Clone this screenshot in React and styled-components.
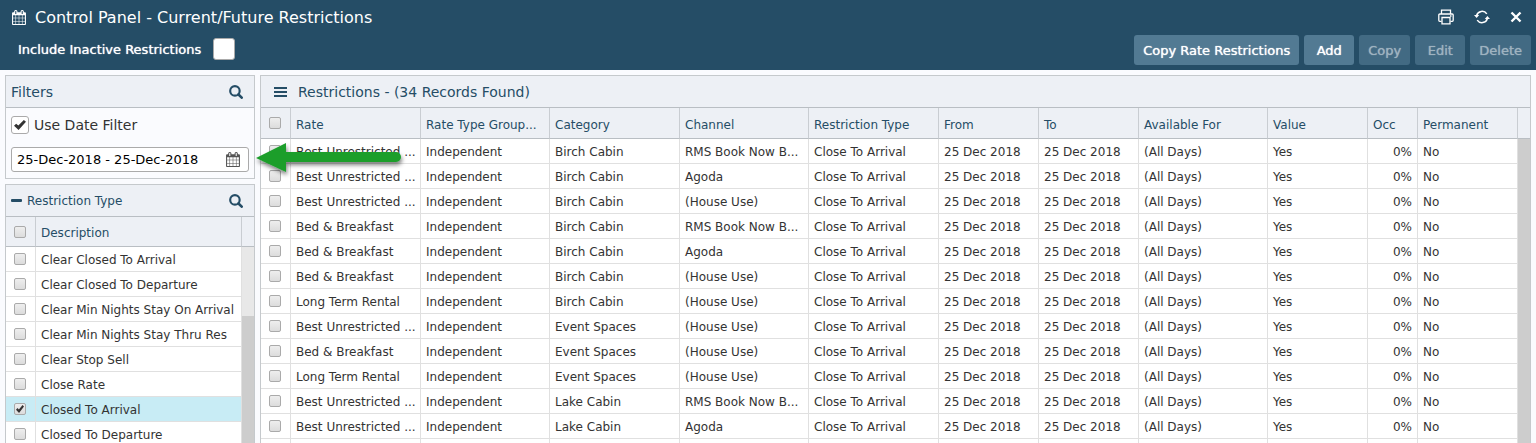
import React, { useState } from 'react';
import styled, { createGlobalStyle } from 'styled-components';

const GlobalStyle = createGlobalStyle`
  * {
    box-sizing: border-box;
  }

  body {
    margin: 0;
    background: #fafbfe;
    color: #333;
    font-family: "DejaVu Sans", Verdana, sans-serif;
    font-size: 12px;
  }
`;

const Page = styled.div`
  display: flex;
  flex-direction: column;
  height: 100vh;
  overflow: hidden;
`;

const Header = styled.header`
  flex: none;
  background: #254d66;
  color: #fff;
`;

const TitleBar = styled.div`
  display: flex;
  align-items: center;
  justify-content: space-between;
  height: 34px;
  padding: 0 14px 0 12px;
`;

const Title = styled.h1`
  display: flex;
  align-items: center;
  gap: 9px;
  margin: 0;
  font-size: 16px;
  font-weight: normal;
`;

const WindowTools = styled.div`
  display: flex;
  align-items: center;
  gap: 20px;
`;

const IconButton = styled.button`
  display: flex;
  align-items: center;
  justify-content: center;
  padding: 0;
  border: 0;
  background: none;
  color: inherit;
  cursor: pointer;
`;

const ToolBar = styled.div`
  display: flex;
  align-items: flex-start;
  justify-content: space-between;
  height: 36px;
  padding: 1px 5px 0 18px;
`;

const InactiveLabel = styled.label`
  display: flex;
  align-items: center;
  gap: 12px;
  height: 28px;
  font-size: 13px;
  text-shadow: 0 0 1px currentColor;
`;

const Actions = styled.div`
  display: flex;
  gap: 5px;
`;

const ActionButton = styled.button`
  min-width: 50px;
  height: 30px;
  padding: 0 9px;
  border: 0;
  border-radius: 3px;
  background: #527a93;
  color: #fff;
  font-family: inherit;
  font-size: 13px;
  text-shadow: 0 0 1px currentColor;
  cursor: pointer;

  &:disabled {
    background: #426a83;
    color: #9fb3c0;
    cursor: default;
  }
`;

const Content = styled.main`
  display: flex;
  flex: 1;
  gap: 5px;
  min-height: 0;
  padding: 5px 5px 0;
`;

const Sidebar = styled.div`
  display: flex;
  flex: none;
  flex-direction: column;
  gap: 5px;
  width: 250px;
`;

const Panel = styled.section`
  display: flex;
  flex-direction: column;
  flex: ${props => (props.$fill ? '1' : 'none')};
  min-width: 0;
  min-height: 0;
  border: 1px solid #c5c9cc;
  border-bottom-width: ${props => (props.$fill ? '0' : '1px')};
  overflow: hidden;
`;

const PanelHeader = styled.div`
  display: flex;
  flex: none;
  align-items: center;
  justify-content: space-between;
  height: 32px;
  padding: 0 11px 0 5px;
  border-bottom: 1px solid #b9bec3;
  background: #edf0f5;
  color: #254d66;
`;

const PanelTitle = styled.h2`
  display: flex;
  align-items: center;
  gap: ${props => (props.$wide ? '11px' : '5px')};
  margin: 0;
  padding-left: ${props => (props.$wide ? '8px' : '0')};
  font-size: ${props => (props.$small ? '12px' : '14px')};
  font-weight: normal;
`;

const FilterBody = styled.div`
  display: flex;
  flex-direction: column;
  gap: 13px;
  padding: 8px 5px 6px;
`;

const FilterCheck = styled.label`
  display: flex;
  align-items: center;
  gap: 5px;
  font-size: 14px;
`;

const DateField = styled.div`
  display: flex;
  align-items: center;
  height: 25px;
  padding: 0 8px 0 5px;
  border: 1px solid #aaa;
  border-radius: 3px;
  background: #fff;
  color: #555;
`;

const DateInput = styled.input`
  flex: 1;
  min-width: 0;
  padding: 0;
  border: 0;
  outline: 0;
  background: none;
  color: #000;
  font-family: inherit;
  font-size: 13px;
`;

const CheckBox = styled.input.attrs({ type: 'checkbox' })`
  display: flex;
  flex: none;
  align-items: center;
  justify-content: center;
  appearance: none;
  width: ${props => props.$size}px;
  height: ${props => props.$size}px;
  margin: 0;
  border: 1px solid #aaa;
  border-radius: ${props => (props.$size > 12 ? '3px' : '2px')};
  background: ${props => (props.$size > 12 ? '#fff' : 'linear-gradient(#eee, #dcdcdc)')};

  &:checked::after {
    content: '';
    width: ${props => (props.$size > 12 ? '12px' : '8px')};
    height: ${props => (props.$size > 12 ? '10px' : '8px')};
    background: #333;
    clip-path: polygon(0 58%, 18% 38%, 36% 56%, 82% 0, 100% 18%, 38% 100%);
  }
`;

const GridArea = styled.div`
  display: flex;
  flex: 1;
  align-items: stretch;
  min-height: 0;
  overflow: hidden;
  background: #fff;
`;

const Table = styled.table`
  flex: 1;
  align-self: flex-start;
  width: 100%;
  min-width: 0;
  table-layout: fixed;
  border-collapse: separate;
  border-spacing: 0;
`;

const HeadCell = styled.th`
  height: ${props => props.$height};
  padding: ${props => (props.$check ? '0 0 0 8px' : '3px 2px 0 5px')};
  border-right: 1px solid #c9cdd2;
  border-bottom: 1px solid #b9bec3;
  background: #edf0f5;
  color: #254d66;
  font-weight: normal;
  text-align: left;
  white-space: nowrap;
  overflow: hidden;
`;

const Cell = styled.td`
  height: 25px;
  padding: ${props => (props.$check ? '0 0 0 8px' : '2px 5px 0')};
  border-right: 1px solid #e0e0e0;
  border-bottom: 1px solid #e0e0e0;
  text-align: ${props => (props.$right ? 'right' : 'left')};
  white-space: nowrap;
  overflow: hidden;
`;

const Row = styled.tr`
  background: ${props => (props.$selected ? '#c8ecf5' : '#fff')};
`;

const ScrollTrack = styled.div`
  display: flex;
  flex: none;
  flex-direction: column;
  width: ${props => props.$width};
  background: #e8e8e8;
`;

const ScrollCap = styled.div`
  height: ${props => props.$height};
  border-bottom: 1px solid #b9bec3;
  background: #edf0f5;
`;

const ScrollThumb = styled.div`
  flex: 1;
  margin-top: ${props => props.$top};
  background: #cdcdcd;
`;

const ArrowLayer = styled.svg`
  position: absolute;
  top: 138px;
  left: 250px;
  pointer-events: none;
`;

const CalendarIcon = () => (
  <svg width="14" height="15" viewBox="64 0 1664 1792" fill="currentColor" aria-hidden="true">
    <path d="M192 1664h288v-288h-288v288zm352 0h320v-288h-320v288zm-352-352h288v-320h-288v320zm352 0h320v-320h-320v320zm-352-384h288v-288h-288v288zm736 736h320v-288h-320v288zm-384-736h320v-288h-320v288zm768 736h288v-288h-288v288zm-384-352h320v-320h-320v320zm-352-864v-288q0-13-9.500-22.500t-22.500-9.500h-64q-13 0-22.500 9.500t-9.500 22.500v288q0 13 9.500 22.500t22.500 9.500h64q13 0 22.500-9.500t9.500-22.500zm736 864h288v-320h-288v320zm-384-384h320v-288h-320v288zm384 0h288v-288h-288v288zm32-480v-288q0-13-9.500-22.500t-22.500-9.500h-64q-13 0-22.500 9.500t-9.500 22.500v288q0 13 9.500 22.500t22.500 9.500h64q13 0 22.500-9.500t9.500-22.500zm384-64v1280q0 52-38 90t-90 38h-1408q-52 0-90-38t-38-90v-1280q0-52 38-90t90-38h128v-96q0-66 47-113t113-47h64q66 0 113 47t47 113v96h384v-96q0-66 47-113t113-47h64q66 0 113 47t47 113v96h128q52 0 90 38t38 90z" />
  </svg>
);

const SearchIcon = () => (
  <svg width="14" height="14" viewBox="0 0 13 13" fill="none" stroke="currentColor" aria-hidden="true">
    <circle cx="5.500" cy="5.500" r="4.400" strokeWidth="2" />
    <path d="M8.800 8.800l3 3" strokeWidth="2.400" strokeLinecap="round" />
  </svg>
);

const PrintIcon = () => (
  <svg width="16" height="16" viewBox="0 0 16 16" fill="none" stroke="currentColor" strokeWidth="1.300" aria-hidden="true">
    <path d="M3.500 5V1.200h9V5M3.500 12.300H1.800a1 1 0 0 1-1-1V6a1 1 0 0 1 1-1h12.400a1 1 0 0 1 1 1v5.300a1 1 0 0 1-1 1h-1.700" />
    <path d="M4 8.500h8v6.300H4z" />
    <path d="M12 7h1.500" />
  </svg>
);

const RefreshIcon = () => (
  <svg width="16" height="16" viewBox="0 0 16 16" fill="none" stroke="currentColor" strokeWidth="1.500" aria-hidden="true">
    <path d="M2.600 6.500A5.700 5.700 0 0 1 12.800 4.800M13.400 9.500A5.700 5.700 0 0 1 3.200 11.200" />
    <path d="M0 6h5.200L2.600 9zM16 10h-5.200l2.600-3z" fill="currentColor" stroke="none" />
  </svg>
);

const CloseIcon = () => (
  <svg width="12" height="12" viewBox="0 0 12 12" stroke="currentColor" strokeWidth="2.400" aria-hidden="true">
    <path d="M1.500 1.500l9 9M10.500 1.500l-9 9" />
  </svg>
);

const MenuIcon = () => (
  <svg width="13" height="12" viewBox="0 0 13 12" fill="currentColor" aria-hidden="true">
    <path d="M0 1h13v2H0zM0 5h13v2H0zM0 9h13v2H0z" />
  </svg>
);

const MinusIcon = () => (
  <svg width="11" height="12" viewBox="0 0 11 12" fill="currentColor" aria-hidden="true">
    <rect y="4" width="11" height="3" rx="1" />
  </svg>
);

const restrictionTypes = [
  'Clear Closed To Arrival',
  'Clear Closed To Departure',
  'Clear Min Nights Stay On Arrival',
  'Clear Min Nights Stay Thru Res',
  'Clear Stop Sell',
  'Close Rate',
  'Closed To Arrival',
  'Closed To Departure'
];

const columns = [
  { title: 'Rate', width: 130 },
  { title: 'Rate Type Group...', width: 129 },
  { title: 'Category', width: 130 },
  { title: 'Channel', width: 129 },
  { title: 'Restriction Type', width: 130 },
  { title: 'From', width: 100 },
  { title: 'To', width: 100 },
  { title: 'Available For', width: 129 },
  { title: 'Value', width: 100 },
  { title: 'Occ', width: 50, right: true },
  { title: 'Permanent', width: 100 }
];

const restrictions = [
  ['Best Unrestricted ...', 'Birch Cabin', 'RMS Book Now B...'],
  ['Best Unrestricted ...', 'Birch Cabin', 'Agoda'],
  ['Best Unrestricted ...', 'Birch Cabin', '(House Use)'],
  ['Bed & Breakfast', 'Birch Cabin', 'RMS Book Now B...'],
  ['Bed & Breakfast', 'Birch Cabin', 'Agoda'],
  ['Bed & Breakfast', 'Birch Cabin', '(House Use)'],
  ['Long Term Rental', 'Birch Cabin', '(House Use)'],
  ['Best Unrestricted ...', 'Event Spaces', '(House Use)'],
  ['Bed & Breakfast', 'Event Spaces', '(House Use)'],
  ['Long Term Rental', 'Event Spaces', '(House Use)'],
  ['Best Unrestricted ...', 'Lake Cabin', 'RMS Book Now B...'],
  ['Best Unrestricted ...', 'Lake Cabin', 'Agoda']
].map(([rate, category, channel]) => [
  rate, 'Independent', category, channel, 'Close To Arrival',
  '25 Dec 2018', '25 Dec 2018', '(All Days)', 'Yes', '0%', 'No'
]);

const RestrictionTypePanel = () => {
  const [selected, setSelected] = useState(['Closed To Arrival']);

  const toggle = name => {
    if (selected.includes(name)) {
      setSelected(selected.filter(item => item !== name));
    } else {
      setSelected([...selected, name]);
    }
  };

  return (
    <Panel $fill>
      <PanelHeader>
        <PanelTitle $small><MinusIcon />Restriction Type</PanelTitle>
        <IconButton aria-label="Search restriction types"><SearchIcon /></IconButton>
      </PanelHeader>
      <GridArea>
        <Table>
          <colgroup>
            <col width="30" />
            <col />
          </colgroup>
          <thead>
            <tr>
              <HeadCell $height="30px" $check>
                <CheckBox $size={12} aria-label="Select all types" />
              </HeadCell>
              <HeadCell $height="30px">Description</HeadCell>
            </tr>
          </thead>
          <tbody>
            {restrictionTypes.map(name => (
              <Row key={name} $selected={selected.includes(name)}>
                <Cell $check>
                  <CheckBox $size={12} aria-label={name} checked={selected.includes(name)} onChange={() => toggle(name)} />
                </Cell>
                <Cell>{name}</Cell>
              </Row>
            ))}
          </tbody>
        </Table>
        <ScrollTrack $width="12px">
          <ScrollCap $height="30px" />
          <ScrollThumb $top="69px" />
        </ScrollTrack>
      </GridArea>
    </Panel>
  );
};

const RestrictionsPanel = () => (
  <Panel $fill>
    <PanelHeader>
      <PanelTitle $wide>
        <IconButton aria-label="Menu"><MenuIcon /></IconButton>
        Restrictions - (34 Records Found)
      </PanelTitle>
    </PanelHeader>
    <GridArea>
      <Table>
        <colgroup>
          <col width="30" />
          {columns.map(column => <col key={column.title} width={column.width} />)}
        </colgroup>
        <thead>
          <tr>
            <HeadCell $height="31px" $check>
              <CheckBox $size={12} aria-label="Select all restrictions" />
            </HeadCell>
            {columns.map(column => <HeadCell key={column.title} $height="31px">{column.title}</HeadCell>)}
          </tr>
        </thead>
        <tbody>
          {restrictions.map((values, row) => (
            <Row key={row}>
              <Cell $check>
                <CheckBox $size={12} aria-label={`Select row ${row + 1}`} />
              </Cell>
              {values.map((value, i) => <Cell key={columns[i].title} $right={columns[i].right}>{value}</Cell>)}
            </Row>
          ))}
          <Row>
            <Cell />
            {columns.map(column => <Cell key={column.title} />)}
          </Row>
        </tbody>
      </Table>
      <ScrollTrack $width="13px">
        <ScrollCap $height="31px" />
        <ScrollThumb $top="0" />
      </ScrollTrack>
    </GridArea>
  </Panel>
);

const App = () => {
  const [includeInactive, setIncludeInactive] = useState(false);
  const [useDateFilter, setUseDateFilter] = useState(true);
  const [dates, setDates] = useState('25-Dec-2018 - 25-Dec-2018');

  return (
    <Page>
      <GlobalStyle />
      <Header>
        <TitleBar>
          <Title><CalendarIcon />Control Panel - Current/Future Restrictions</Title>
          <WindowTools>
            <IconButton aria-label="Print"><PrintIcon /></IconButton>
            <IconButton aria-label="Refresh"><RefreshIcon /></IconButton>
            <IconButton aria-label="Close"><CloseIcon /></IconButton>
          </WindowTools>
        </TitleBar>
        <ToolBar>
          <InactiveLabel>
            Include Inactive Restrictions
            <CheckBox $size={22} checked={includeInactive} onChange={event => setIncludeInactive(event.target.checked)} />
          </InactiveLabel>
          <Actions>
            <ActionButton>Copy Rate Restrictions</ActionButton>
            <ActionButton>Add</ActionButton>
            <ActionButton disabled>Copy</ActionButton>
            <ActionButton disabled>Edit</ActionButton>
            <ActionButton disabled>Delete</ActionButton>
          </Actions>
        </ToolBar>
      </Header>
      <Content>
        <Sidebar>
          <Panel>
            <PanelHeader>
              <PanelTitle>Filters</PanelTitle>
              <IconButton aria-label="Search filters"><SearchIcon /></IconButton>
            </PanelHeader>
            <FilterBody>
              <FilterCheck>
                <CheckBox $size={18} checked={useDateFilter} onChange={event => setUseDateFilter(event.target.checked)} />
                Use Date Filter
              </FilterCheck>
              <DateField>
                <DateInput aria-label="Date range" value={dates} onChange={event => setDates(event.target.value)} />
                <IconButton aria-label="Pick dates"><CalendarIcon /></IconButton>
              </DateField>
            </FilterBody>
          </Panel>
          <RestrictionTypePanel />
        </Sidebar>
        <RestrictionsPanel />
      </Content>
      <ArrowLayer width="160" height="44" viewBox="0 0 160 44" aria-hidden="true">
        <defs>
          <filter id="arrow-shadow" x="-10%" y="-20%" width="120%" height="160%">
            <feDropShadow dx="1" dy="3" stdDeviation="2" floodOpacity="0.5" />
          </filter>
        </defs>
        <path
          d="M6 20L36 5v9h110a5 5 0 0 1 0 10H36v10z"
          fill="#1b9e2c"
          filter="url(#arrow-shadow)"
        />
      </ArrowLayer>
    </Page>
  );
};

export default App;
